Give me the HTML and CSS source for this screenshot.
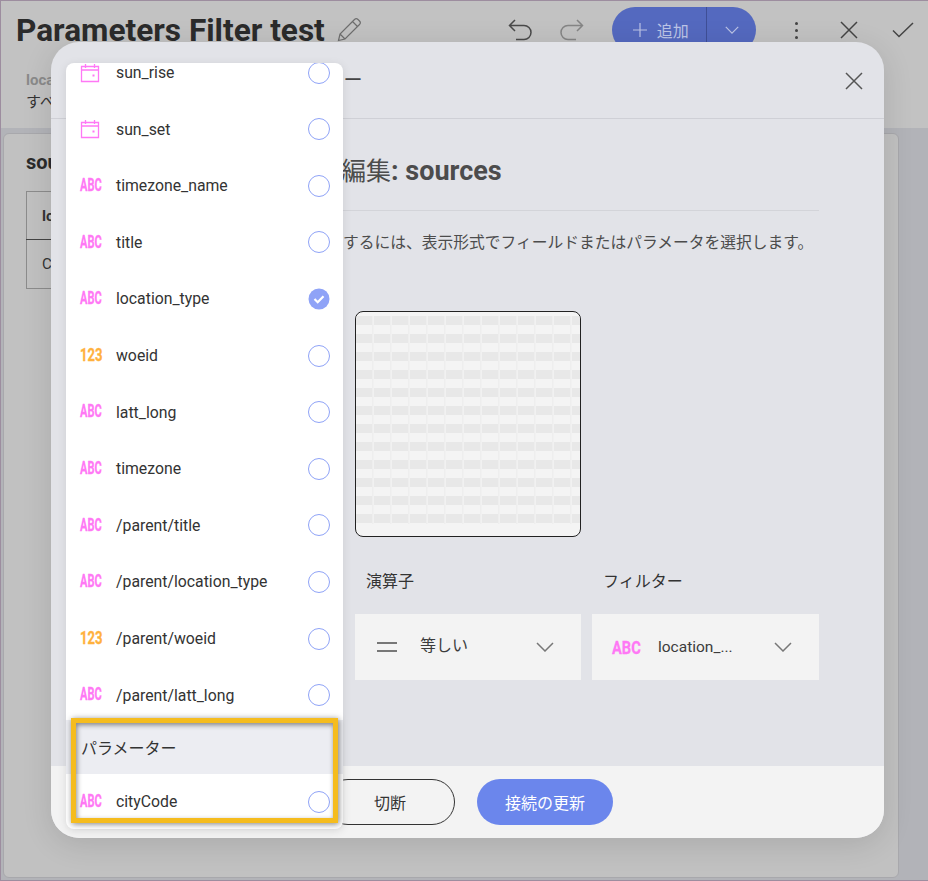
FILE: index.html
```html
<!DOCTYPE html>
<html lang="ja">
<head>
  <meta charset="UTF-8" />
  <title>Parameters Filter test</title>
  <link rel="stylesheet" href="styles.css">
</head>
<body>

  <svg class="defs" width="0" height="0">
    <symbol id="calendar" viewBox="0 0 20 20">
      <path d="M1.500 3.500h17v15h-17zM1.500 7h17M5.500 1v4M14.500 1v4" fill="none" stroke="currentColor" stroke-width="1.300"/>
      <rect x="12.500" y="11.500" width="2" height="2" fill="currentColor"/>
    </symbol>
    <symbol id="chevron" viewBox="0 0 18 10">
      <path d="M1 1l8 8 8-8" fill="none" stroke="currentColor" stroke-width="1.500"/>
    </symbol>
    <symbol id="cross" viewBox="0 0 18 18">
      <path d="M1 1l16 16M17 1L1 17" fill="none" stroke="currentColor" stroke-width="1.500"/>
    </symbol>
  </svg>

  <header class="topbar">
    <div class="topbar-row">
      <h1>Parameters Filter test</h1>
      <svg class="pencil" width="24" height="24" viewBox="0 0 24 24"><path d="M1.500 22.500l1.500-6.500L17.500 1.500a2.500 2.500 0 0 1 3.500 0l1.500 1.500a2.500 2.500 0 0 1 0 3.500L8 21zM3 16l5 5M15.500 3.500l5 5" fill="none" stroke="currentColor" stroke-width="1.200"/></svg>
      <div class="tools">
        <svg class="tool undo" width="24" height="22" viewBox="0 0 24 22"><path d="M7 1L1.500 6.500 7 12M1.500 6.500H16a6.500 6.500 0 0 1 0 14H8" fill="none" stroke="currentColor" stroke-width="1.500"/></svg>
        <svg class="tool redo" width="24" height="22" viewBox="0 0 24 22"><path d="M17 1l5.500 5.500L17 12M22.500 6.500H8a6.500 6.500 0 0 0 0 14h8" fill="none" stroke="currentColor" stroke-width="1.500"/></svg>
        <div class="add-btn">
          <span class="add-main">
            <svg width="16" height="16" viewBox="0 0 16 16"><path d="M8 1v14M1 8h14" fill="none" stroke="currentColor" stroke-width="1.200"/></svg>
            追加
          </span>
          <span class="add-arrow"><svg width="14" height="8"><use href="#chevron"/></svg></span>
        </div>
        <div class="dots"><i></i><i></i><i></i></div>
        <svg class="tool close" width="18" height="18"><use href="#cross"/></svg>
        <svg class="tool check" width="22" height="16" viewBox="0 0 22 16"><path d="M1 8.500l6 6L21 1" fill="none" stroke="currentColor" stroke-width="1.500"/></svg>
      </div>
    </div>
    <div class="page-filter">
      <b>location</b>
      <span>すべて</span>
    </div>
  </header>

  <main class="content">
    <section class="card">
      <h2>sources</h2>
      <table class="data">
        <tr><th>location</th></tr>
        <tr><td>City</td></tr>
      </table>
    </section>
  </main>

  <div class="modal">
    <div class="modal-head">
      <span class="modal-title">フィルター</span>
      <svg class="modal-close" width="18" height="18"><use href="#cross"/></svg>
    </div>
    <div class="modal-body">
      <h3>編集<b>: sources</b></h3>
      <p class="hint">するには、表示形式でフィールドまたはパラメータを選択します。</p>
      <div class="form-grid">
        <div class="preview"><div class="preview-cells"></div></div>
      </div>
      <div class="form-grid fields">
        <div class="field">
          <label>演算子</label>
          <div class="select">
            <span class="equals"><i></i><i></i></span>
            <span class="select-text jp">等しい</span>
            <svg class="select-arrow" width="18" height="10"><use href="#chevron"/></svg>
          </div>
        </div>
        <div class="field">
          <label>フィルター</label>
          <div class="select">
            <span class="type-box big"><em class="type abc">ABC</em></span>
            <span class="select-text">location_...</span>
            <svg class="select-arrow" width="18" height="10"><use href="#chevron"/></svg>
          </div>
        </div>
      </div>
    </div>
    <div class="modal-foot">
      <button class="btn btn-line">切断</button>
      <button class="btn btn-fill">接続の更新</button>
    </div>
  </div>

  <div class="dropdown">
    <ul class="list">
      <li><svg class="type-cal" width="20" height="20"><use href="#calendar"/></svg><span>sun_rise</span><i class="radio"></i></li>
      <li><svg class="type-cal" width="20" height="20"><use href="#calendar"/></svg><span>sun_set</span><i class="radio"></i></li>
      <li><span class="type-box"><em class="type abc">ABC</em></span><span>timezone_name</span><i class="radio"></i></li>
      <li><span class="type-box"><em class="type abc">ABC</em></span><span>title</span><i class="radio"></i></li>
      <li><span class="type-box"><em class="type abc">ABC</em></span><span>location_type</span>
        <svg class="radio-on" width="22" height="22" viewBox="0 0 22 22"><circle cx="11" cy="11" r="10.500" fill="#8fa3f7"/><path d="M6.500 11l3.200 3.200 5.800-6" fill="none" stroke="#fff" stroke-width="2.200"/></svg>
      </li>
      <li><span class="type-box"><em class="type num">123</em></span><span>woeid</span><i class="radio"></i></li>
      <li><span class="type-box"><em class="type abc">ABC</em></span><span>latt_long</span><i class="radio"></i></li>
      <li><span class="type-box"><em class="type abc">ABC</em></span><span>timezone</span><i class="radio"></i></li>
      <li><span class="type-box"><em class="type abc">ABC</em></span><span>/parent/title</span><i class="radio"></i></li>
      <li><span class="type-box"><em class="type abc">ABC</em></span><span>/parent/location_type</span><i class="radio"></i></li>
      <li><span class="type-box"><em class="type num">123</em></span><span>/parent/woeid</span><i class="radio"></i></li>
      <li><span class="type-box"><em class="type abc">ABC</em></span><span>/parent/latt_long</span><i class="radio"></i></li>
    </ul>
    <div class="list-section">パラメーター</div>
    <div class="list-param"><span class="type-box"><em class="type abc">ABC</em></span><span>cityCode</span><i class="radio"></i></div>
  </div>

  <div class="callout"></div>

</body>
</html>
```

FILE: styles.css
```css
:root {
  --pink: #ff78f5;
  --orange: #ffb13d;
  --radio: #8fa3f7;
  --text: #333;
  --modal: #e2e3e8;
}

* {
  box-sizing: border-box;
  margin: 0;
  padding: 0;
}

body {
  width: 928px;
  height: 881px;
  position: relative;
  overflow: hidden;
  display: flex;
  flex-direction: column;
  border: 1px solid #9d8d9f;
  border-right: 0;
  font-family: Roboto, "Noto Sans CJK JP", sans-serif;
  color: var(--text);
  background: #b2b3b8;
}

.defs {
  position: absolute;
}

/* page behind the dialog */
.topbar {
  height: 127px;
  flex: none;
  padding: 0 0 0 15px;
  background: #c2c2c2;
}

.topbar-row {
  display: flex;
  align-items: center;
  height: 58px;
}

.topbar h1 {
  font-size: 31.600px;
  font-weight: 700;
  color: #2b2b2b;
}

.pencil {
  margin-left: 12px;
  color: #6e6e6e;
}

.tools {
  display: flex;
  align-items: center;
  margin-left: 147px;
}

.tool {
  flex: none;
}

.undo {
  color: #4a4a4a;
}

.redo {
  margin-left: 28px;
  color: #858585;
}

.add-btn {
  display: flex;
  width: 144px;
  height: 46px;
  margin-left: 28px;
  border-radius: 23px;
  background: #5469bf;
  color: #bcc4e6;
  font-size: 16px;
}

.add-main {
  display: flex;
  align-items: center;
  gap: 9px;
  width: 95px;
  padding-left: 20px;
  border-right: 1px solid #3f4f96;
}

.add-arrow {
  display: flex;
  align-items: center;
  padding-left: 18px;
}

.dots {
  display: flex;
  flex-direction: column;
  gap: 4px;
  margin-left: 39px;
}

.dots i {
  width: 3px;
  height: 3px;
  border-radius: 50%;
  background: #444;
}

.close {
  margin-left: 42px;
  color: #444;
}

.check {
  margin-left: 34px;
  color: #444;
}

.page-filter {
  display: flex;
  flex-direction: column;
  gap: 1px;
  padding: 12px 0 0 10px;
  font-size: 15px;
}

.page-filter b {
  color: #8a8a8a;
}

.content {
  flex: 1;
  display: flex;
  padding: 5px 29px 2px 2px;
}

.card {
  flex: 1;
  padding: 16px 22px;
  border: 1px solid #a8a8ac;
  border-radius: 6px;
  background: #c1c1c1;
}

.card h2 {
  font-size: 20px;
  color: #2b2b2b;
}

.data {
  margin-top: 17px;
  border-collapse: collapse;
  font-size: 15px;
}

.data th,
.data td {
  width: 200px;
  height: 49px;
  padding-left: 15px;
  text-align: left;
  border: 1px solid #8c8c8c;
}

.data th {
  height: 48px;
  border-bottom-color: #444;
}

/* dialog */
.modal {
  position: absolute;
  left: 50px;
  top: 41px;
  width: 833px;
  height: 796px;
  display: flex;
  flex-direction: column;
  overflow: hidden;
  border-radius: 28px;
  background: var(--modal);
  box-shadow: 0 6px 30px rgba(0, 0, 0, 0.12);
}

.modal-head {
  flex: none;
  height: 77px;
  display: flex;
  align-items: center;
  justify-content: space-between;
  padding: 0 21px 0 217px;
  border-bottom: 1px solid #cfd0d6;
}

.modal-title {
  margin-top: -4px;
  font-size: 19px;
  color: #444;
}

.modal-close {
  margin-top: 1px;
  color: #555;
}

.modal-body {
  flex: 1;
  padding: 35px 65px 0 67px;
}

.modal-body h3 {
  height: 57px;
  padding-left: 223px;
  border-bottom: 1px solid #d3d4d9;
  font-size: 25px;
  line-height: 34px;
  font-weight: 400;
  color: #4c4c4c;
}

.modal-body h3 b {
  font-size: 27px;
  font-weight: 700;
}

.hint {
  margin-top: 21px;
  padding-left: 225px;
  font-size: 15.750px;
  line-height: 22px;
  color: #4c4c4c;
  white-space: nowrap;
}

.form-grid {
  display: grid;
  grid-template-columns: 1fr 226px 227px;
  gap: 11px;
  margin-top: 57px;
}

.form-grid > :first-child {
  grid-column-start: 2;
}

.fields {
  margin-top: 33px;
}

.preview {
  height: 226px;
  padding: 4px 0 12px 0;
  border: 1px solid #222;
  border-radius: 8px;
  background: #f4f4f4;
  overflow: hidden;
}

.preview-cells {
  height: 208px;
  background:
    repeating-linear-gradient(90deg, transparent 0 16px, #eeeeee 16px 17px, #f1f1f1 17px 18px),
    repeating-linear-gradient(180deg, #e8e8e8 0 9px, #f4f4f4 9px 18px);
}

.field label {
  display: block;
  padding: 1px 0 0 11px;
  font-size: 16px;
  line-height: 22px;
  color: #333;
}

.select {
  height: 66px;
  margin-top: 21px;
  display: flex;
  align-items: center;
  padding: 0 27px 0 20px;
  background: #f3f3f3;
}

.select-text {
  flex: 1;
  font-size: 15.500px;
  color: #3c3c3c;
}

.select-text.jp {
  margin-top: -6px;
  font-size: 16px;
}

.select-arrow {
  color: #777;
}

.equals {
  display: flex;
  flex-direction: column;
  gap: 6px;
  width: 43px;
  margin-left: 2px;
}

.equals i {
  width: 20px;
  height: 2px;
  background: #777;
}

/* type badges are narrow labels in the product, squeezed here */
.type-box {
  flex: 0 0 36px;
  display: block;
  line-height: 1;
  font-size: 17.500px;
}

.type-box.big {
  flex-basis: 46px;
  font-size: 19px;
}

.type {
  display: inline-block;
  transform: scaleX(0.63);
  transform-origin: left center;
  font-style: normal;
  font-weight: 700;
  -webkit-text-stroke: 0.3px currentColor;
}

.type.num {
  transform: scaleX(0.75);
}

.type-box.big .type {
  transform: scaleX(0.77);
}

.type.abc {
  color: var(--pink);
}

.type.num {
  color: var(--orange);
}

.type-cal {
  flex: none;
  margin: 0 16px 0 0;
  color: var(--pink);
}

/* field dropdown lying over the dialog */
.dropdown {
  position: absolute;
  left: 65px;
  top: 62px;
  width: 277px;
  height: 766px;
  overflow: hidden;
  border-radius: 8px;
  background: #fff;
  box-shadow: 0 2px 10px rgba(0, 0, 0, 0.1);
}

.list {
  height: 657px;
  overflow: hidden;
  list-style: none;
}

.list li:first-child {
  margin-top: -18.700px;
}

.list li,
.list-param {
  display: flex;
  align-items: center;
  padding: 0 13.500px 0 14px;
  font-size: 15.800px;
  color: var(--text);
}

.list li {
  height: 56.600px;
}

.list li > span:nth-last-child(2),
.list-param > span:nth-last-child(2) {
  flex: 1;
}

.radio {
  flex: none;
  width: 22px;
  height: 22px;
  border: 1.750px solid var(--radio);
  border-radius: 50%;
}

.list-section {
  height: 54px;
  display: flex;
  align-items: center;
  padding-left: 15px;
  background: #ecedf2;
  font-size: 16px;
  color: #333;
}

.list-param {
  height: 55px;
}

.btn {
  height: 46px;
  border-radius: 23px;
  font-family: inherit;
  font-size: 16px;
}

.modal-foot {
  flex: none;
  height: 72px;
  display: flex;
  align-items: center;
  gap: 22px;
  padding: 0 0 0 274px;
  background: #f3f3f3;
}

.btn-line {
  width: 130px;
  border: 1px solid #333;
  background: transparent;
  color: #333;
}

.btn-fill {
  width: 136px;
  border: 0;
  background: #6b86ec;
  color: #fff;
}

/* annotation box from the screenshot */
.callout {
  position: absolute;
  left: 70px;
  top: 717px;
  width: 267px;
  height: 105px;
  border: 5px solid #f5bc1e;
  box-shadow: 1px 1px 6px rgba(0, 0, 0, 0.5), inset 1px 2px 5px rgba(0, 0, 0, 0.45);
}
```
